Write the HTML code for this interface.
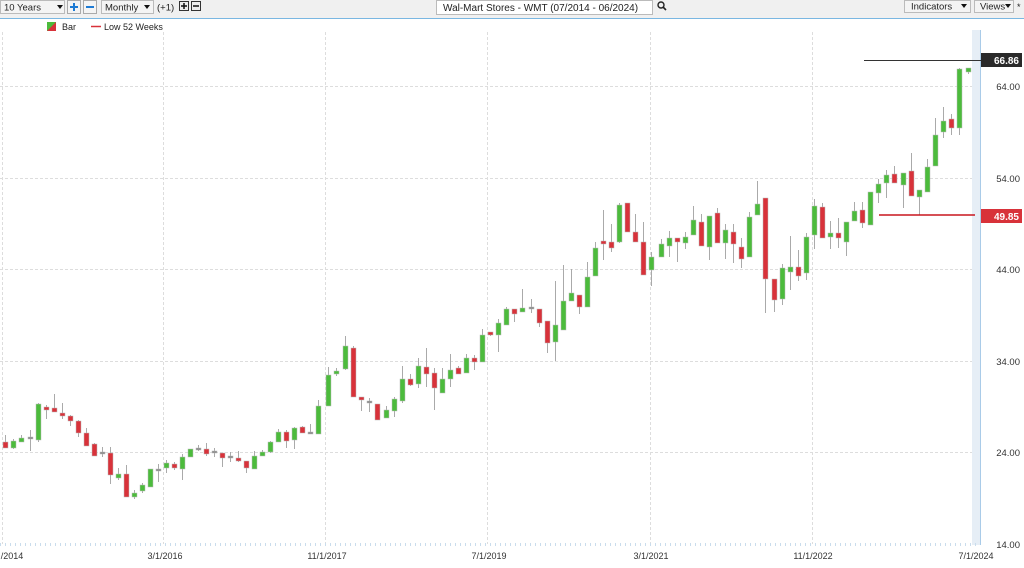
<!DOCTYPE html>
<html><head><meta charset="utf-8"><style>
body{margin:0;width:1024px;height:568px;overflow:hidden;background:#fff;font-family:"Liberation Sans",sans-serif;}
svg{display:block}
</style></head><body>
<svg id="s" width="1024" height="568" xmlns="http://www.w3.org/2000/svg" font-family="Liberation Sans, sans-serif">
<rect x="0" y="0" width="1024" height="18" fill="#f0f0f0"/>
<line x1="0" y1="18.5" x2="1024" y2="18.5" stroke="#7ab7e2" stroke-width="1"/>
<!-- toolbar -->
<rect x="0.5" y="0.5" width="64" height="13" fill="#f4f4f4" stroke="#bbb"/>
<text x="4" y="10.5" font-size="9.5" fill="#222">10 Years</text>
<path d="M57 5h6l-3 4z" fill="#111"/>
<rect x="67.5" y="0.5" width="13" height="13" fill="#f4f4f4" stroke="#aaa"/>
<path d="M74 3v8M70 7h8" stroke="#1e7bd4" stroke-width="2"/>
<rect x="83.5" y="0.5" width="13" height="13" fill="#f4f4f4" stroke="#aaa"/>
<path d="M86 7h8" stroke="#1e7bd4" stroke-width="2"/>
<rect x="101.5" y="0.5" width="52" height="13" fill="#f4f4f4" stroke="#bbb"/>
<text x="105" y="10.5" font-size="9.5" fill="#222">Monthly</text>
<path d="M144 5h6l-3 4z" fill="#111"/>
<text x="157" y="10.5" font-size="9.5" fill="#222">(+1)</text>
<rect x="179.5" y="1.5" width="9" height="9" fill="#eee" stroke="#333"/>
<path d="M184 3v6M181 6h6" stroke="#111" stroke-width="1.5"/>
<rect x="191.5" y="1.5" width="9" height="9" fill="#eee" stroke="#333"/>
<path d="M193 6h6" stroke="#111" stroke-width="1.5"/>
<rect x="436.5" y="0.5" width="216" height="14" fill="#fff" stroke="#bbb"/>
<text x="443" y="11" font-size="10" fill="#222">Wal-Mart Stores - WMT (07/2014 - 06/2024)</text>
<circle cx="661" cy="5" r="3" fill="none" stroke="#222" stroke-width="1.4"/>
<path d="M663 7l3 3" stroke="#222" stroke-width="1.6"/>
<rect x="904.5" y="0.5" width="66" height="12" fill="#f4f4f4" stroke="#bbb"/>
<text x="911" y="9.5" font-size="9.5" fill="#222">Indicators</text>
<path d="M961 4h6l-3 4z" fill="#111"/>
<rect x="974.5" y="0.5" width="39" height="12" fill="#f4f4f4" stroke="#bbb"/>
<text x="980" y="9.5" font-size="9.5" fill="#222">Views</text>
<path d="M1005 4h6l-3 4z" fill="#111"/>
<text x="1017" y="10" font-size="9" fill="#222">*</text>
<!-- legend -->
<path d="M47 22h9v9h-9z" fill="#4cbb3c"/><path d="M47 31l9-9v9z" fill="#d8323a"/>
<text x="62" y="30" font-size="9" fill="#222">Bar</text>
<line x1="91" y1="26.5" x2="101" y2="26.5" stroke="#d8323a" stroke-width="1.5"/>
<text x="104" y="30" font-size="9" fill="#222">Low 52 Weeks</text>
<!-- grid -->
<g stroke="#ddd" stroke-dasharray="3,2" stroke-width="1">
<line x1="163.5" y1="32" x2="163.5" y2="544"/><line x1="325.5" y1="32" x2="325.5" y2="544"/>
<line x1="487.5" y1="32" x2="487.5" y2="544"/><line x1="650.5" y1="32" x2="650.5" y2="544"/>
<line x1="812.5" y1="32" x2="812.5" y2="544"/><line x1="2.5" y1="32" x2="2.5" y2="544"/>
<line x1="0" y1="86.5" x2="972" y2="86.5"/><line x1="0" y1="178.5" x2="972" y2="178.5"/>
<line x1="0" y1="269.5" x2="972" y2="269.5"/><line x1="0" y1="361.5" x2="972" y2="361.5"/>
<line x1="0" y1="452.5" x2="972" y2="452.5"/>
</g>
<rect x="972" y="30" width="8" height="515" fill="#e6eef6"/>
<line x1="980.5" y1="30" x2="980.5" y2="545" stroke="#a9cbe8"/>
<line x1="0" y1="544.5" x2="980" y2="544.5" stroke="#c9dcec" stroke-dasharray="1,4" stroke-width="3"/>
<g id="c"></g>
<!-- lines -->
<line x1="864" y1="60.5" x2="981" y2="60.5" stroke="#333" stroke-width="1"/>
<rect x="981" y="53" width="41" height="14" fill="#2a2a2a"/>
<text x="1019" y="64" font-size="10" font-weight="bold" fill="#fff" text-anchor="end">66.86</text>
<line x1="879" y1="215" x2="975" y2="215" stroke="#c8161e" stroke-width="1.5"/>
<rect x="981" y="209" width="41" height="14" fill="#d8323a"/>
<text x="1019" y="220" font-size="10" font-weight="bold" fill="#fff" text-anchor="end">49.85</text>
<g font-size="9.5" fill="#333" text-anchor="end">
<text x="1020" y="90">64.00</text><text x="1020" y="182">54.00</text><text x="1020" y="273">44.00</text>
<text x="1020" y="365">34.00</text><text x="1020" y="456">24.00</text><text x="1020" y="548">14.00</text>
</g>
<g font-size="9" fill="#333" text-anchor="middle">
<text x="12" y="559">/2014</text><text x="165" y="559">3/1/2016</text><text x="327" y="559">11/1/2017</text>
<text x="489" y="559">7/1/2019</text><text x="651" y="559">3/1/2021</text><text x="813" y="559">11/1/2022</text>
<text x="976" y="559">7/1/2024</text>
</g>
</svg>
<script>
var d=[[5,442,448,435,448,'r'],[13,441,448,439,449,'g'],[21,438,442,435,442,'g'],[30,437,439,430,451,'d'],[38,404,440,403,442,'g'],[46,407,410,405,419,'r'],[54,408,412,394,412,'r'],[62,413,416,403,419,'r'],[70,416,421,415,426,'r'],[78,421,433,420,437,'r'],[86,433,446,428,446,'r'],[94,444,456,443,456,'r'],[102,452,454,447,457,'d'],[110,453,475,447,484,'r'],[118,474,478,468,480,'g'],[126,474,497,465,497,'r'],[134,493,497,490,499,'g'],[142,485,491,483,493,'g'],[150,469,487,469,487,'g'],[158,469,471,464,482,'d'],[166,463,468,460,473,'g'],[174,464,468,462,470,'r'],[182,457,469,454,480,'g'],[190,449,457,449,457,'g'],[198,448,450,445,451,'d'],[206,449,454,443,456,'r'],[214,451,453,448,457,'d'],[222,453,458,453,467,'r'],[230,456,458,452,462,'d'],[238,458,461,451,462,'r'],[246,461,468,461,473,'r'],[254,456,469,451,469,'g'],[262,452,456,450,456,'g'],[270,442,452,441,453,'g'],[278,432,442,429,442,'g'],[286,432,441,430,448,'r'],[294,428,440,427,449,'g'],[302,427,433,426,433,'r'],[310,432,434,424,434,'d'],[318,406,434,400,434,'g'],[328,375,406,367,406,'g'],[336,371,374,368,376,'g'],[345,346,369,336,370,'g'],[353,348,397,346,397,'r'],[361,397,400,397,411,'r'],[369,401,403,398,412,'d'],[377,404,420,404,420,'r'],[386,410,418,406,418,'g'],[394,399,411,397,417,'g'],[402,379,401,366,403,'g'],[410,379,385,374,386,'r'],[418,366,384,358,388,'g'],[426,367,374,348,387,'r'],[434,373,388,368,410,'r'],[442,379,393,368,393,'g'],[450,370,379,354,387,'g'],[458,368,374,366,374,'r'],[466,358,373,354,373,'g'],[474,358,362,355,370,'r'],[482,335,362,329,362,'g'],[490,332,335,332,336,'r'],[498,323,335,319,352,'g'],[506,309,325,307,325,'g'],[514,309,314,309,322,'r'],[522,308,312,289,312,'g'],[531,307,309,299,313,'d'],[539,309,323,309,327,'r'],[547,321,343,321,353,'r'],[555,325,342,281,361,'g'],[563,301,330,265,330,'g'],[571,293,301,269,301,'g'],[579,295,307,295,314,'r'],[587,277,307,262,307,'g'],[595,248,276,242,276,'g'],[603,241,244,210,260,'r'],[611,242,248,224,252,'r'],[619,205,242,203,243,'g'],[627,203,232,203,232,'r'],[635,232,242,214,242,'r'],[643,242,275,222,275,'r'],[651,257,270,252,286,'g'],[661,244,257,239,257,'g'],[669,238,246,231,257,'g'],[677,238,242,238,262,'r'],[685,237,243,232,249,'g'],[693,220,235,206,235,'g'],[701,222,246,214,246,'r'],[709,216,247,216,260,'g'],[717,213,243,208,243,'r'],[725,230,243,224,259,'g'],[733,232,244,224,263,'r'],[741,247,259,238,268,'r'],[749,217,257,212,257,'g'],[757,204,215,181,215,'g'],[765,198,279,198,313,'r'],[774,279,300,279,312,'r'],[782,268,299,264,305,'g'],[790,267,272,236,290,'g'],[798,267,276,250,281,'r'],[806,237,273,233,280,'g'],[814,206,235,199,249,'g'],[822,207,238,203,238,'r'],[830,233,237,221,249,'g'],[838,233,238,218,248,'r'],[846,222,242,222,256,'g'],[854,211,221,202,221,'g'],[862,210,223,202,228,'r'],[870,192,225,192,225,'g'],[878,184,193,179,203,'g'],[886,175,183,170,198,'g'],[894,174,183,166,183,'r'],[903,173,185,173,208,'g'],[911,171,196,153,196,'r'],[919,190,197,190,215,'g'],[927,167,192,159,192,'g'],[935,135,166,118,166,'g'],[943,121,132,107,138,'g'],[951,119,128,114,135,'r'],[959,69,128,68,135,'g'],[968,68,72,68,74,'g']];
var h='';d.forEach(function(c){var x=c[0];h+='<line x1="'+(x+.5)+'" y1="'+c[3]+'" x2="'+(x+.5)+'" y2="'+c[4]+'" stroke="#aaa"/>';
var col=c[5]=='g'?'#4cbb3c':c[5]=='r'?'#d8323a':'#888';var bh=Math.max(c[2]-c[1],1);
h+='<rect x="'+(x-2)+'" y="'+c[1]+'" width="5" height="'+bh+'" fill="'+col+'" stroke="#bbb" stroke-width="0.5"/>';});
document.getElementById('c').innerHTML=h;
</script>
</body></html>
